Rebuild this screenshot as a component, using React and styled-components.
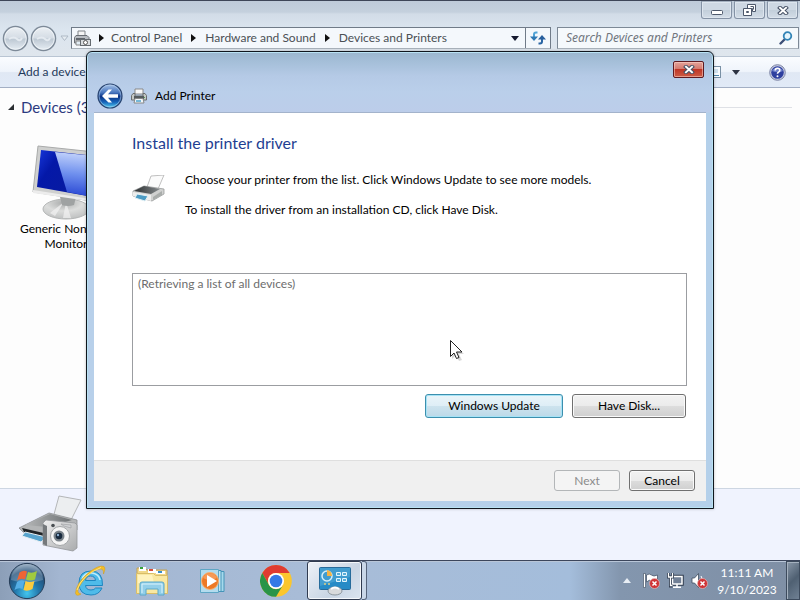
import React from "react";
import styled, { createGlobalStyle, css } from "styled-components";

const GlobalStyle = createGlobalStyle`
  *, *::before, *::after { box-sizing: border-box; }
  body { margin: 0; overflow: hidden; }
  body, button, input {
    font-family: Lato, "Open Sans", sans-serif;
    font-size: 12px;
    line-height: 16px;
    color: #000;
  }
  button { cursor: default; padding: 0; }
  svg { display: block; flex: none; }
`;

/* ---------- desktop and explorer window ---------- */

const Desktop = styled.div`
  position: relative;
  display: flex;
  flex-direction: column;
  height: 100vh;
  overflow: hidden;
  border-top: 1px solid #3e4658;
`;

const Explorer = styled.main`
  flex: 1;
  min-height: 0;
  display: flex;
  flex-direction: column;
`;

const Glass = styled.header`
  display: flex;
  flex-direction: column;
  gap: 8px;
  height: 55px;
  background: linear-gradient(#bfcbd9 0, #c4d0dd 11px, #d2dce7 13px, #dbe5ef 28px, #dfe6ed 100%);
`;

const CaptionButtons = styled.div`
  display: flex;
  justify-content: flex-end;
  gap: 2px;
  padding-right: 2px;
`;

const CaptionButton = styled.button`
  display: flex;
  align-items: center;
  justify-content: center;
  width: 31px;
  height: 18px;
  border: 1px solid #8492a5;
  border-top-color: #a5b1c0;
  border-radius: 0 0 3px 3px;
  background: linear-gradient(#ced8e3 50%, #c2ceda 50%, #d3dde7);
  box-shadow: inset 0 0 0 1px #dde5ee;
`;

const NavRow = styled.div`
  display: flex;
  align-items: center;
  height: 22px;
  padding-right: 1px;
`;

const History = styled.div`
  display: flex;
  align-items: center;
  gap: 1px;
  width: 71px;
  padding-left: 2px;
`;

const RoundButton = styled.button`
  display: flex;
  border: 0;
  background: none;
`;

const AddressBar = styled.nav`
  flex: 1;
  display: flex;
  align-items: center;
  height: 22px;
  padding-left: 2px;
  border: 1px solid #707b88;
  border-bottom-color: #a9b2bb;
  background: #f4f8fc;
`;

const Crumb = styled.a`
  color: #4b5055;
  text-decoration: none;
  white-space: nowrap;
`;

const CrumbArrow = styled.span`
  display: flex;
  justify-content: center;
  width: ${(p) => (p.$first ? "20px" : "23px")};
`;

const Spacer = styled.span`
  flex: 1;
`;

const AddressButton = styled.button`
  display: flex;
  align-items: center;
  justify-content: center;
  width: ${(p) => (p.$divided ? "25px" : "21px")};
  height: 20px;
  border: 0;
  border-left: ${(p) => (p.$divided ? "1px solid #707b88" : "0")};
  background: none;
`;

const SearchBox = styled.label`
  display: flex;
  align-items: center;
  width: 242px;
  height: 22px;
  margin-left: 6px;
  padding: 0 5px 0 8px;
  border: 1px solid #7d8996;
  border-bottom-color: #a9b2bb;
  background: #f5f9fc;
`;

const SearchInput = styled.input`
  flex: 1;
  min-width: 0;
  padding: 0;
  border: 0;
  outline: 0;
  background: none;
  font-family: "Noto Sans", sans-serif;
  font-style: italic;
  &::placeholder { color: #70767e; opacity: 1; }
`;

const CommandBar = styled.div`
  display: flex;
  align-items: center;
  height: 32px;
  padding: 0 14px 0 18px;
  border-top: 1px solid #b9c5d3;
  border-bottom: 1px solid #a3afc4;
  background: linear-gradient(#fafcff 0, #eff4fb 48%, #e0e8f4 52%, #e1eaf7 100%);
`;

const CommandButton = styled.button`
  display: flex;
  align-items: center;
  margin-left: ${(p) => p.$gap || "0"};
  border: 0;
  background: none;
  color: #1e395b;
`;

const DevicePane = styled.section`
  flex: 1;
  min-height: 0;
  padding: 9px 8px;
  background: #fdfdfd;
`;

const GroupHeading = styled.h2`
  display: flex;
  align-items: center;
  gap: 7px;
  margin: 0;
  font-size: 15px;
  font-weight: 400;
  line-height: 20px;
  color: #2c3a80;
  &::after {
    content: "";
    flex: 1;
    border-top: 1px solid #dfe1e6;
  }
`;

const Device = styled.figure`
  display: flex;
  flex-direction: column;
  align-items: center;
  width: 112px;
  margin: 28px 0 0 2px;
`;

const DeviceName = styled.figcaption`
  display: flex;
  flex-direction: column;
  align-items: center;
  line-height: 15px;
  white-space: nowrap;
`;

const DetailsPane = styled.footer`
  display: flex;
  align-items: center;
  height: 72px;
  padding: 0 0 4px 17px;
  border-top: 1px solid #cdd6e2;
  background: #f0f3fe;
`;

/* ---------- dialog ---------- */

const Dialog = styled.section`
  position: absolute;
  top: 50px;
  left: 86px;
  right: 86px;
  padding: 0 7px 7px;
  border: 1px solid #10161d;
  border-radius: 6px 6px 0 0;
  background:
    linear-gradient(#9bb6ce 0, #a5bfd9 10px, #b5cae6 24px, #bacfea 40px, #bccdea 60px, transparent 61px),
    linear-gradient(90deg, #b8d0ea, #b4d0ea);
  box-shadow: inset 0 0 0 1px #b9e2f3, 0 0 3px rgba(0, 0, 0, 0.25);
`;

const DialogTop = styled.header`
  display: flex;
  flex-direction: column;
  height: 60px;
  padding: 9px 2px 0 3px;
`;

const CloseButton = styled.button`
  align-self: flex-end;
  display: flex;
  align-items: center;
  justify-content: center;
  width: 31px;
  height: 17px;
  border: 1px solid #5e1a20;
  border-radius: 2px;
  background: linear-gradient(#e3a39a 0, #d4786c 48%, #bf3626 50%, #cd5c45 100%);
  box-shadow: inset 0 0 0 1px rgba(255, 220, 210, 0.5);
`;

const DialogTitle = styled.h1`
  display: flex;
  align-items: center;
  gap: 8px;
  height: 26px;
  margin: 5px 0 0;
  font-size: 12px;
  font-weight: 400;
`;

const DialogBody = styled.div`
  display: flex;
  flex-direction: column;
  padding: 18px 19px 42px 38px;
  border-top: 1px solid #a3b3cb;
  background: #fff;
`;

const Heading = styled.h2`
  margin: 0;
  font-size: 16px;
  font-weight: 400;
  line-height: 24px;
  color: #1f3f92;
`;

const Intro = styled.div`
  display: flex;
  align-items: flex-start;
  gap: 19px;
  margin-top: 17px;
  > svg { margin-top: 3px; }
`;

const IntroText = styled.div`
  display: flex;
  flex-direction: column;
  gap: 14px;
  p { margin: 0; white-space: nowrap; }
`;

const DeviceList = styled.ul`
  height: 113px;
  margin: 55px 0 8px;
  padding: 2px 5px;
  border: 1px solid #9b9da1;
  list-style: none;
  color: #6d6d6d;
`;

const ButtonRow = styled.div`
  display: flex;
  justify-content: flex-end;
  gap: 9px;
  padding-right: 1px;
`;

const buttonLook = {
  normal: css`
    border-color: #707070;
    background: linear-gradient(#f2f2f2 0, #ebebeb 50%, #dddddd 50%, #cfcfcf 100%);
    box-shadow: inset 0 0 0 1px #fafafa;
  `,
  primary: css`
    border-color: #3c8fae;
    background: linear-gradient(#eaf4f9 0, #deeef6 50%, #cde3ee 50%, #bcd9e8 100%);
    box-shadow: inset 0 0 0 1px #a6e3f6;
  `,
  disabled: css`
    border-color: #b3b6b8;
    background: #f4f4f4;
    color: #8b8b8b;
  `,
};

const PushButton = styled.button`
  width: ${(p) => p.$width};
  height: ${(p) => (p.$tall ? "24px" : "21px")};
  border: 1px solid;
  border-radius: 3px;
  ${(p) => buttonLook[p.$look || "normal"]}
`;

const DialogFooter = styled.footer`
  display: flex;
  justify-content: flex-end;
  gap: 9px;
  padding: 9px 11px 10px;
  border-top: 1px solid #dfdfdf;
  background: #f0f0f0;
`;

const Pointer = styled.span`
  position: absolute;
  top: 338px;
  left: 449px;
  pointer-events: none;
`;

/* ---------- taskbar ---------- */

const Taskbar = styled.footer`
  display: flex;
  align-items: stretch;
  height: 40px;
  border-top: 1px solid #3c465c;
  background: linear-gradient(90deg, #8c9fb8 0, #a3b6d1 60px, #a8bcd7 300px, #a4bddb 570px, #8396ae 620px, #7f8fa5 100%);
  box-shadow: inset 0 1px 0 #b9c6d8;
`;

const StartButton = styled.button`
  display: flex;
  align-items: center;
  width: 59px;
  padding-left: 8px;
  border: 0;
  background: none;
`;

const TaskButton = styled.button`
  display: flex;
  align-items: center;
  justify-content: center;
  width: 62px;
  border: 0;
  background: none;
`;

const ActiveTask = styled(TaskButton)`
  width: 55px;
  border: 1px solid #303b50;
  border-radius: 3px;
  background: linear-gradient(135deg, #eef2f8, #c9d5e4 60%, #dbe4ef);
  box-shadow: inset 0 0 0 1px #f4f7fb;
`;

const TaskStack = styled.span`
  width: 5px;
  border: 1px solid #56647b;
  border-left: 0;
  border-radius: 0 3px 3px 0;
  background: #c9d7e8;
`;

const Tray = styled.div`
  display: flex;
  align-items: center;
  margin-left: auto;
`;

const TrayIcons = styled.div`
  display: flex;
  align-items: center;
  gap: 7px;
  margin-left: 12px;
`;

const TrayButton = styled.button`
  display: flex;
  border: 0;
  background: none;
`;

const Clock = styled.time`
  width: 78px;
  padding-top: 1px;
  text-align: center;
  line-height: 17px;
  color: #fff;
`;

const ShowDesktop = styled.button`
  align-self: stretch;
  width: 14px;
  border: 1px solid #3d4b5d;
  background: linear-gradient(135deg, #8a98a9, #4f6072 50%, #708194);
  box-shadow: inset 1px 1px 0 #a5b1bf;
`;

/* ---------- icons ---------- */

const Triangle = ({ dir = "right", fill = "#111" }) =>
  dir === "right" ? (
    <svg width="5" height="8" viewBox="0 0 5 8"><path d="M0 0l5 4-5 4z" fill={fill} /></svg>
  ) : (
    <svg width="8" height="5" viewBox="0 0 8 5"><path d="M0 0h8L4 5z" fill={fill} /></svg>
  );

const GreyOrb = () => (
  <svg width="27" height="27" viewBox="0 0 27 27">
    <defs>
      <linearGradient id="orb" x1="0" y1="0" x2="0" y2="1">
        <stop offset="0" stopColor="#edf1f5" /><stop offset=".48" stopColor="#d4dce4" />
        <stop offset=".52" stopColor="#bdc8d3" /><stop offset="1" stopColor="#e8eff5" />
      </linearGradient>
    </defs>
    <circle cx="13.500" cy="13.500" r="12" fill="url(#orb)" stroke="#7d8a98" strokeWidth="1.500" />
    <circle cx="13.500" cy="13.500" r="10.800" fill="none" stroke="#f4f7fa" strokeWidth=".8" />
    <path d="M7 14q5-3 8 0t5-1" fill="none" stroke="#e4eaf0" strokeWidth="2" />
  </svg>
);

const BackOrb = () => (
  <svg width="26" height="26" viewBox="0 0 26 26">
    <defs>
      <linearGradient id="back" x1="0" y1="0" x2="0" y2="1">
        <stop offset="0" stopColor="#a9c4e8" /><stop offset=".35" stopColor="#4a78c0" />
        <stop offset=".52" stopColor="#0c3486" /><stop offset=".75" stopColor="#1763b9" />
        <stop offset="1" stopColor="#52d3f5" />
      </linearGradient>
    </defs>
    <circle cx="13" cy="13" r="12" fill="url(#back)" stroke="#294470" strokeWidth="1.200" />
    <circle cx="13" cy="13" r="10.900" fill="none" stroke="#b9d4ef" strokeOpacity=".7" strokeWidth=".8" />
    <path d="M5 13l6.500-6.500h3.500L11 11.200h10v3.600H11l4 4.700h-3.500z" fill="#fff" />
  </svg>
);

const MiniPrinter = () => (
  <svg width="16" height="16" viewBox="0 0 16 16">
    <path d="M4 1h8v5H4z" fill="#fafafa" stroke="#888" />
    <path d="M2 5.500h2V8h8V5.500h2l1.500 2V12h-15V7.500z" fill="#c5c8c5" stroke="#6b6e6e" />
    <path d="M3 8h10v3H3z" fill="#555b5e" />
    <path d="M4 10.500h8l1 4.500H3z" fill="#f2f8fb" stroke="#888" />
    <path d="M5 12h5v2H5z" fill="#75b8d9" />
    <path d="M13 9h1v1h-1z" fill="#57a557" />
  </svg>
);

const DevicesIcon = () => (
  <svg width="17" height="17" viewBox="0 0 17 17">
    <path d="M4 1h7v5H4z" fill="#f5f5f5" stroke="#80858a" />
    <path d="M2 5.500h11l2 2V13H.5V7.500z" fill="#b9bdc2" stroke="#6a6f75" />
    <path d="M2 8h9v2H2z" fill="#60666c" />
    <path d="M2 11h5v4H2z" fill="#e2eef6" stroke="#888" />
    <rect x="6.500" y="9.500" width="10" height="6" fill="#d8dcdf" stroke="#656b70" />
    <circle cx="11.500" cy="12.500" r="2" fill="#fff" stroke="#555" />
  </svg>
);

const RefreshIcon = () => (
  <svg width="16" height="14" viewBox="0 0 16 14">
    <path d="M7.500 1.500H6q-2 0-2 2V6" fill="none" stroke="#4fa3d6" strokeWidth="2" />
    <path d="M0 5.500h8L4 10z" fill="#2f78b3" />
    <path d="M8.500 12.500H10q2 0 2-2V8" fill="none" stroke="#2a65a4" strokeWidth="2" />
    <path d="M8 8.500h8L12 4z" fill="#275f9d" />
  </svg>
);

const SearchIcon = () => (
  <svg width="14" height="14" viewBox="0 0 14 14">
    <path d="M1.500 12.500L6 8" stroke="#3b4f77" strokeWidth="2.400" strokeLinecap="round" />
    <circle cx="8.500" cy="5" r="3.800" fill="#e5f5fc" stroke="#3284b6" strokeWidth="1.800" />
  </svg>
);

const ViewIcon = () => (
  <svg width="16" height="14" viewBox="0 0 16 14">
    <rect x=".5" y="1.500" width="14" height="11" fill="#f8fbfe" stroke="#7990a5" />
    <path d="M2 10h11v1H2z" fill="#4c86ad" />
    <path d="M3 4h9v4H3z" fill="#cfe1ef" />
  </svg>
);

const HelpIcon = () => (
  <svg width="17" height="17" viewBox="0 0 17 17">
    <circle cx="8.500" cy="8.500" r="7.800" fill="#c7cce2" stroke="#7c84a4" />
    <circle cx="8.500" cy="8.500" r="6.300" fill="#2e3f9f" />
    <path d="M3 7a6 6 0 0 1 11 0q-5 2.500-11 0z" fill="#6f80cb" />
    <path d="M6.200 6.500q0-2.300 2.300-2.300t2.300 2q0 1.200-1.300 1.900-1 .6-1 1.700" fill="none" stroke="#fff" strokeWidth="1.600" />
    <circle cx="8.500" cy="12.200" r="1" fill="#fff" />
  </svg>
);

const Cross = () => (
  <svg width="12" height="9" viewBox="0 0 12 9">
    <path d="M3 1.800l6 5.400m0-5.400l-6 5.400" stroke="#475266" strokeWidth="4" strokeLinecap="square" />
    <path d="M3 1.800l6 5.400m0-5.400l-6 5.400" stroke="#fff" strokeWidth="2" strokeLinecap="square" />
  </svg>
);

const Minimise = () => (
  <svg width="12" height="10" viewBox="0 0 12 10">
    <rect x=".5" y="5.500" width="11" height="4" rx="1" fill="#fff" stroke="#4d586b" />
  </svg>
);

const Restore = () => (
  <svg width="13" height="12" viewBox="0 0 13 12">
    <path d="M4.500.5h8v7h-3v-3h-5z" fill="#fff" stroke="#4d586b" />
    <path d="M.5 4.500h8v7h-8z" fill="#fff" stroke="#4d586b" />
    <path d="M3.500 7.500h2v1h-2z" fill="#bac7d4" stroke="#4d586b" />
    <path d="M7.500 2.500h3v3" fill="none" stroke="#4d586b" />
  </svg>
);

const Monitor = () => (
  <svg width="68" height="76" viewBox="0 0 68 76">
    <defs>
      <linearGradient id="scr" x1="0" y1="0" x2="1" y2=".5">
        <stop offset="0" stopColor="#1638dc" /><stop offset=".3" stopColor="#0418a8" />
        <stop offset="1" stopColor="#0a1c9c" />
      </linearGradient>
      <linearGradient id="shine" x1=".3" y1="0" x2=".2" y2="1">
        <stop offset="0" stopColor="#c3d3fb" /><stop offset=".45" stopColor="#6f90ee" />
        <stop offset="1" stopColor="#1d3bcf" />
      </linearGradient>
      <radialGradient id="foot" cx=".45" cy=".2" r=".8">
        <stop offset="0" stopColor="#a9abab" /><stop offset=".5" stopColor="#dcdddc" />
        <stop offset="1" stopColor="#bfc1c1" />
      </radialGradient>
    </defs>
    <ellipse cx="34" cy="64" rx="23" ry="10" fill="url(#foot)" stroke="#b4b6b6" />
    <path d="M32 57L18 68l5 3zM34 57l-3 16h8z" fill="#f2f2f2" fillOpacity=".7" />
    <path d="M27 48h18l-3 12q-6 2-12 0z" fill="#9fa2a2" />
    <path d="M6 1l66 7v50L1 47z" fill="#cfd0cf" stroke="#a9abaa" />
    <path d="M9 5l63 7v42L5 42z" fill="url(#scr)" />
    <path d="M23 7l49 5v42l-37-7z" fill="url(#shine)" />
    <path d="M1 45l71 11v2L1 48z" fill="#ececec" />
  </svg>
);

const Printer = () => (
  <svg width="34" height="28" viewBox="0 0 34 28">
    <defs>
      <linearGradient id="lid" x1="0" y1="0" x2="1" y2="0">
        <stop offset="0" stopColor="#2c3032" /><stop offset="1" stopColor="#84898b" />
      </linearGradient>
    </defs>
    <path d="M15 12L19 1l13-1-6 14z" fill="#fbfbfb" stroke="#b0b0b0" strokeWidth=".8" />
    <path d="M1 16l11-5 20 3v5l-12 7L1 21z" fill="#d0d1d0" stroke="#999c9c" strokeWidth=".8" />
    <path d="M2 16l10-5 16 3-9 5z" fill="url(#lid)" />
    <path d="M1 17l18 3v6L1 21z" fill="#eeeeed" />
    <path d="M5 19l11 2-3 5-10-3z" fill="#4d9cc4" stroke="#e4f1f6" />
    <path d="M21 22l9-6v4l-9 5z" fill="#a9adab" />
  </svg>
);

const PrinterCamera = () => (
  <svg width="66" height="58" viewBox="0 0 66 58">
    <defs>
      <linearGradient id="cam" x1="0" y1="0" x2="1" y2="1">
        <stop offset="0" stopColor="#efefef" /><stop offset="1" stopColor="#a9abad" />
      </linearGradient>
      <linearGradient id="top" x1="0" y1="0" x2="1" y2="0">
        <stop offset="0" stopColor="#b4b6b7" /><stop offset="1" stopColor="#6c7072" />
      </linearGradient>
    </defs>
    <path d="M36 24L42 2l22 4-11 22z" fill="#eceef0" stroke="#b4b6b8" />
    <path d="M2 34l30-15 28 7v10L30 47 6 38z" fill="#b3b5b6" stroke="#8b8e90" strokeWidth=".8" />
    <path d="M8 31l25-11 22 6-25 7z" fill="url(#top)" />
    <path d="M5 34l26 6v5L7 38z" fill="#202427" />
    <path d="M8 38l21 5-5 5-19-6z" fill="#57a3cd" stroke="#e7eff4" />
    <path d="M26 29l3-3 29 3 2 2v23l-4 3-30-6z" fill="url(#cam)" stroke="#94979a" strokeWidth=".8" />
    <path d="M26 30l4 2v20l-4-2z" fill="#75797c" />
    <circle cx="43" cy="42" r="9.500" fill="#f5f5f5" stroke="#a4a7a9" />
    <circle cx="42" cy="42" r="5.500" fill="#7a838a" />
    <circle cx="42" cy="42" r="3.300" fill="#17293d" />
    <circle cx="41" cy="41" r="1.200" fill="#8cafd0" />
    <circle cx="36" cy="31.500" r="1.800" fill="#494e52" />
    <path d="M44 30l10 1v3l-7-2z" fill="#d0d2d4" stroke="#989b9d" strokeWidth=".6" />
  </svg>
);

const StartOrb = () => (
  <svg width="38" height="38" viewBox="0 0 38 38">
    <defs>
      <radialGradient id="start" cx=".5" cy=".85" r=".85">
        <stop offset="0" stopColor="#42c5ee" /><stop offset=".4" stopColor="#2377ab" />
        <stop offset=".75" stopColor="#234f78" /><stop offset="1" stopColor="#8ea6bd" />
      </radialGradient>
    </defs>
    <circle cx="19" cy="19" r="17.600" fill="url(#start)" stroke="#263d57" />
    <path d="M3 18A16 16 0 0 1 35 18Q19 23 3 18z" fill="#fff" fillOpacity=".22" />
    <path d="M11.500 10.500q4-3 7.500-1l-2 8q-4-2-8 1z" fill="#ee6534" />
    <path d="M20 10q4 2 9-1l-2 8.500q-5 2-9 0z" fill="#a1ca3f" />
    <path d="M9 20q4-3 7.500-1l-2 8q-4-2-8 1z" fill="#55aee5" />
    <path d="M17.500 19q4 2 9 0l-2 8q-5 3-9 1z" fill="#fccb3e" />
  </svg>
);

const IeIcon = () => (
  <svg width="34" height="34" viewBox="0 0 34 34">
    <path d="M26 21h2.500q.500-14-11-14Q6 7.500 6 19t12 11.500q8 0 10-7" fill="none" stroke="none" />
    <path d="M29.500 21.500H12.500q.500 4.500 5.500 4.500 3.500 0 4.500-2h6.500Q26 31 18 31 6 31 6 19T18 7t11.500 14.500zM12.500 16.500h10q-.5-4.500-5-4.500t-5 4.500z" fillRule="evenodd" fill="#4fbbe9" stroke="#1f86c0" strokeWidth="1" />
    <path d="M9 15q3-7 10-6 7 1 8 7" fill="none" stroke="#c2ecfb" strokeWidth="1.500" />
    <path d="M8 30Q3 33 2.500 29 3 20 14 10 26 0 31 2.500q2 2-.5 7.500.5-5-3-5-7 0-15 9Q4 24 5 28q1 2 3 2z" fill="#f3bd28" stroke="#d39c17" strokeWidth=".5" />
    <path d="M4 26Q9 11 28 3.500" fill="none" stroke="#ffe680" strokeWidth="1" />
  </svg>
);

const FolderIcon = () => (
  <svg width="34" height="32" viewBox="0 0 34 32">
    <path d="M2 3h8l2 2h20v23H2z" fill="#f1d888" stroke="#c4a255" />
    <path d="M4 2h7v4H4z" fill="#fff" /><path d="M5 2h3v2H5z" fill="#37a13c" />
    <path d="M13 4h8v4h-8z" fill="#fff" /><path d="M14 4h4v2h-4z" fill="#d84e39" />
    <path d="M21 6h9v3h-9z" fill="#fff" /><path d="M23 6h4v2h-4z" fill="#388ec6" />
    <path d="M1.500 8.500h17l2 2h12v18h-31z" fill="#f9e8a2" stroke="#d9bd68" />
    <path d="M3 10h14l2 8H3z" fill="#fff3be" />
    <path d="M5 30V19q0-2 2-2h20q2 0 2 2v11h-6v-6H11v6z" fill="#93cfe9" stroke="#5aa8ca" />
    <path d="M7 28v-9h20v9" fill="none" stroke="#dbf4fd" />
  </svg>
);

const MediaIcon = () => (
  <svg width="30" height="28" viewBox="0 0 30 28">
    <path d="M8 4.500h17v20H8z" fill="#a6d9ec" stroke="#4594b8" />
    <path d="M5 3.500h17v21H5z" fill="#c2e5f1" stroke="#4594b8" />
    <path d="M1.500 2.500h18v23h-18z" fill="#b3dcee" stroke="#5ea6c5" />
    <circle cx="11" cy="14" r="8.500" fill="#ee7925" stroke="#f7b374" />
    <path d="M4 11a7.500 7.500 0 0 1 14 0q-7 4-14 0z" fill="#f9a76b" fillOpacity=".7" />
    <path d="M8 8l10 6-10 6z" fill="#fff" />
  </svg>
);

const ChromeIcon = () => (
  <svg width="32" height="32" viewBox="0 0 32 32">
    <circle cx="16" cy="16" r="15.800" fill="#fbc62d" />
    <path d="M2.300 8A15.800 15.800 0 0 1 29.700 8H16a8 8 0 0 0-7 12z" fill="#df3b30" />
    <path d="M2.300 8A15.800 15.800 0 0 0 16 31.800L23 20a8 8 0 0 1-14 0z" fill="#299448" />
    <circle cx="16" cy="16" r="8" fill="#fff" />
    <circle cx="16" cy="16" r="6.300" fill="#3479e5" />
  </svg>
);

const ControlPanelIcon = () => (
  <svg width="34" height="30" viewBox="0 0 34 30">
    <rect x="1.500" y="1.500" width="31" height="22" rx="1" fill="#278bc6" stroke="#276b9b" />
    <path d="M2 2h30v9L2 20z" fill="#69b8df" fillOpacity=".4" />
    <circle cx="9" cy="10" r="5" fill="none" stroke="#d6f0fa" strokeWidth="1.500" />
    <path d="M9 10V4a6 6 0 0 1 5 6z" fill="#f1b347" />
    <path d="M18.500 6.500h4v3h-4zM24.500 6.500h4v3h-4zM18.500 12.500h4v3h-4zM24.500 12.500h4v3h-4z" fill="#58add8" stroke="#e4f6fd" />
    <circle cx="7" cy="18" r="1" fill="#e1cf82" /><circle cx="11" cy="18" r="1" fill="#e1cf82" />
    <ellipse cx="17" cy="25" rx="7" ry="4" fill="#d8dadc" stroke="#8e979f" />
    <path d="M13 23q4-3 8 0" fill="none" stroke="#fff" strokeWidth="2" />
  </svg>
);

const RedBadge = () => (
  <g>
    <circle cx="11.500" cy="11.500" r="5" fill="#cf3436" stroke="#e9b4b5" strokeWidth=".7" />
    <path d="M9.500 9.500l4 4m0-4l-4 4" stroke="#fff" strokeWidth="1.500" />
  </g>
);

const FlagIcon = () => (
  <svg width="17" height="17" viewBox="0 0 17 17">
    <path d="M.5 1.500h2v14h-2z" fill="#fff" stroke="#39475b" strokeWidth=".6" />
    <path d="M3.500 3q3-2 5 0t6 0v7q-4 1-6-1t-5 1z" fill="#fff" stroke="#4b596d" strokeWidth=".8" />
    <RedBadge />
  </svg>
);

const NetworkIcon = () => (
  <svg width="17" height="17" viewBox="0 0 17 17">
    <path d="M5.500 4.500h9.500v7.500H5.500z" fill="#718096" stroke="#2f3b4d" strokeWidth="3.500" />
    <path d="M5.500 4.500h9.500v7.500H5.500z" fill="#718096" stroke="#fff" strokeWidth="1.500" />
    <path d="M10 12v3M6 15.200h8" stroke="#fff" strokeWidth="1.500" />
    <path d="M1.500 1v4h4V1M3.500 5v9h2" fill="none" stroke="#303d50" strokeWidth="3" />
    <path d="M1.500 1v4h4V1M3.500 5v8.500h2" fill="none" stroke="#fff" strokeWidth="1.300" />
  </svg>
);

const SpeakerIcon = () => (
  <svg width="17" height="17" viewBox="0 0 17 17">
    <path d="M1 6h2.500L7.500 1.500v14L3.500 11H1z" fill="#fff" stroke="#3f4c60" strokeWidth=".8" />
    <path d="M10 4q3 3 0 8" fill="none" stroke="#fff" />
    <RedBadge />
  </svg>
);

const PointerIcon = () => (
  <svg width="16" height="22" viewBox="0 0 16 22">
    <path d="M3 3v17l4-4 3 6 3-1-3-6h5z" fill="#000" fillOpacity=".15" />
    <path d="M1.500 1.500v16l3.500-3.500 2.500 5.500 2.500-1-2.500-5.500H13z" fill="#fff" stroke="#222" />
  </svg>
);

const crumbs = ["Control Panel", "Hardware and Sound", "Devices and Printers"];

const pinned = [
  ["Internet Explorer", IeIcon],
  ["Windows Explorer", FolderIcon],
  ["Windows Media Player", MediaIcon],
  ["Google Chrome", ChromeIcon],
];

const tray = [
  ["Action Center", FlagIcon],
  ["Network", NetworkIcon],
  ["Volume", SpeakerIcon],
];

export default function App() {
  return (
    <Desktop>
      <GlobalStyle />
      <Explorer>
        <Glass>
          <CaptionButtons>
            <CaptionButton aria-label="Minimize"><Minimise /></CaptionButton>
            <CaptionButton aria-label="Restore"><Restore /></CaptionButton>
            <CaptionButton aria-label="Close"><Cross /></CaptionButton>
          </CaptionButtons>
          <NavRow>
            <History>
              <RoundButton aria-label="Back"><GreyOrb /></RoundButton>
              <RoundButton aria-label="Forward"><GreyOrb /></RoundButton>
              <RoundButton aria-label="Recent pages">
                <svg width="12" height="7" viewBox="0 0 12 7"><path d="M3 1h7L6.500 5.500z" fill="#e6ecf2" stroke="#aeb9c5" /></svg>
              </RoundButton>
            </History>
            <AddressBar aria-label="Address">
              <DevicesIcon />
              {crumbs.map((name, i) => (
                <React.Fragment key={name}>
                  <CrumbArrow $first={i === 0}><Triangle /></CrumbArrow>
                  <Crumb href="#">{name}</Crumb>
                </React.Fragment>
              ))}
              <Spacer />
              <AddressButton aria-label="Previous locations"><Triangle dir="down" fill="#15192f" /></AddressButton>
              <AddressButton $divided aria-label="Refresh"><RefreshIcon /></AddressButton>
            </AddressBar>
            <SearchBox>
              <SearchInput aria-label="Search" placeholder="Search Devices and Printers" />
              <SearchIcon />
            </SearchBox>
          </NavRow>
        </Glass>
        <CommandBar>
          <CommandButton>Add a device</CommandButton>
          <Spacer />
          <CommandButton aria-label="View"><ViewIcon /></CommandButton>
          <CommandButton $gap="10px" aria-label="More options"><Triangle dir="down" fill="#2c3342" /></CommandButton>
          <CommandButton $gap="29px" aria-label="Help"><HelpIcon /></CommandButton>
        </CommandBar>
        <DevicePane>
          <GroupHeading>
            <svg width="6" height="6" viewBox="0 0 6 6"><path d="M6 0v6H0z" fill="#2b2f33" /></svg>
            Devices (3)
          </GroupHeading>
          <Device>
            <Monitor />
            <DeviceName>
              <span>Generic Non-PnP</span>
              <span>Monitor</span>
            </DeviceName>
          </Device>
        </DevicePane>
        <DetailsPane><PrinterCamera /></DetailsPane>
      </Explorer>

      <Taskbar>
        <StartButton aria-label="Start"><StartOrb /></StartButton>
        {pinned.map(([name, Icon]) => (
          <TaskButton key={name} aria-label={name}><Icon /></TaskButton>
        ))}
        <ActiveTask aria-label="Devices and Printers"><ControlPanelIcon /></ActiveTask>
        <TaskStack />
        <Tray>
          <TrayButton aria-label="Show hidden icons">
            <svg width="8" height="5" viewBox="0 0 8 5"><path d="M0 5h8L4 0z" fill="#e8eef5" /></svg>
          </TrayButton>
          <TrayIcons>
            {tray.map(([name, Icon]) => (
              <TrayButton key={name} aria-label={name}><Icon /></TrayButton>
            ))}
          </TrayIcons>
          <Clock>11:11 AM<br />9/10/2023</Clock>
          <ShowDesktop aria-label="Show desktop" />
        </Tray>
      </Taskbar>

      <Dialog role="dialog" aria-labelledby="dialog-title">
        <DialogTop>
          <CloseButton aria-label="Close"><Cross /></CloseButton>
          <DialogTitle id="dialog-title">
            <RoundButton aria-label="Back"><BackOrb /></RoundButton>
            <MiniPrinter />
            Add Printer
          </DialogTitle>
        </DialogTop>
        <DialogBody>
          <Heading>Install the printer driver</Heading>
          <Intro>
            <Printer />
            <IntroText>
              <p>Choose your printer from the list. Click Windows Update to see more models.</p>
              <p>To install the driver from an installation CD, click Have Disk.</p>
            </IntroText>
          </Intro>
          <DeviceList aria-label="Printers">
            <li>(Retrieving a list of all devices)</li>
          </DeviceList>
          <ButtonRow>
            <PushButton $width="138px" $tall $look="primary">Windows Update</PushButton>
            <PushButton $width="114px" $tall>Have Disk...</PushButton>
          </ButtonRow>
        </DialogBody>
        <DialogFooter>
          <PushButton $width="66px" $look="disabled" disabled>Next</PushButton>
          <PushButton $width="66px">Cancel</PushButton>
        </DialogFooter>
      </Dialog>
      <Pointer><PointerIcon /></Pointer>
    </Desktop>
  );
}
